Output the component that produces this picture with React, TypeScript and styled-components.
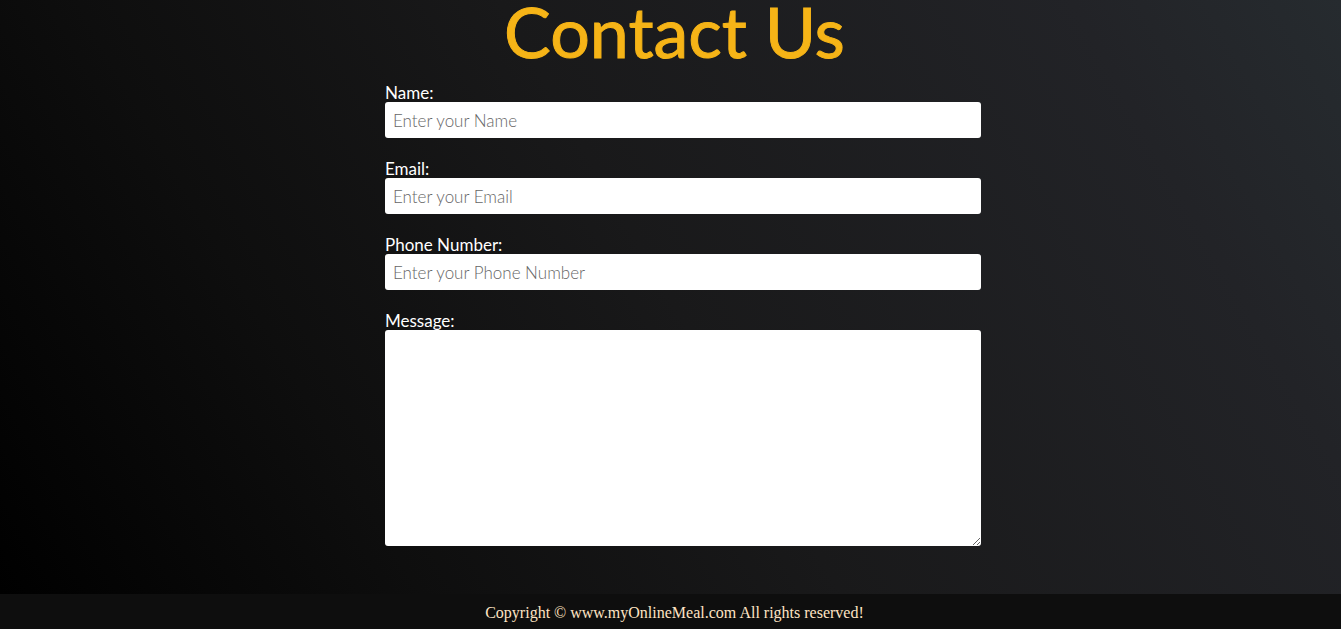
import React from "react";
import styled, { createGlobalStyle } from "styled-components";

const GlobalStyle = createGlobalStyle`
  * {
    box-sizing: border-box;
  }
  body {
    margin: 0;
    background: #000;
  }
`;

const Page = styled.div`
  display: flex;
  flex-direction: column;
  min-height: 100vh;
`;

const Contact = styled.main`
  flex: 1;
  display: flex;
  flex-direction: column;
  align-items: center;
  padding: 0 0 28px 8px;
  font-family: Lato, "Open Sans", sans-serif;
  background: linear-gradient(60deg, #000000, #0e0e0e 25%, #19191a 50%, #222327 84%, #262b2f);
`;

const Title = styled.h1`
  margin: 0;
  font-size: 70px;
  font-weight: 400;
  line-height: 62px;
  white-space: nowrap;
  color: #f6b417;
  -webkit-text-stroke: 1px #f6b417;
  stroke-linejoin: round;
`;

const Form = styled.form`
  width: 100%;
  max-width: 613px;
  padding: 20px 0 0 17px;
`;

const Field = styled.div`
  display: flex;
  flex-direction: column;
  margin-bottom: 20px;
`;

const Label = styled.label`
  padding-top: 2px;
  font-size: 17px;
  line-height: 18px;
  color: #fff;
`;

const Input = styled.input`
  height: 36px;
  padding: 0 8px;
  border: 0;
  border-radius: 3px;
  background: #fff;
  font: 300 17px Lato, "Open Sans", sans-serif;

  &::placeholder {
    color: #666;
  }
`;

const Message = styled.textarea`
  height: 216px;
  padding: 8px;
  border: 0;
  border-radius: 3px;
  background: #fff;
  font: 300 17px Lato, "Open Sans", sans-serif;
  resize: both;
`;

const Footer = styled.footer`
  padding: 9px 0 6px 8px;
  background: #0e0e0e;
  color: #ffe4c4;
  font: 16px/20px "Liberation Serif", "Times New Roman", serif;
  text-align: center;
`;

const fields = [
  { id: "name", label: "Name:", type: "text", placeholder: "Enter your Name" },
  { id: "email", label: "Email:", type: "email", placeholder: "Enter your Email" },
  { id: "phone", label: "Phone Number:", type: "tel", placeholder: "Enter your Phone Number" },
];

export default function App() {
  return (
    <Page>
      <GlobalStyle />
      <Contact>
        <Title>Contact Us</Title>
        <Form>
          {fields.map((field) => (
            <Field key={field.id}>
              <Label htmlFor={field.id}>{field.label}</Label>
              <Input id={field.id} name={field.id} type={field.type} placeholder={field.placeholder} />
            </Field>
          ))}
          <Field>
            <Label htmlFor="message">Message:</Label>
            <Message id="message" name="message" />
          </Field>
        </Form>
      </Contact>
      <Footer>Copyright © www.myOnlineMeal.com All rights reserved!</Footer>
    </Page>
  );
}
